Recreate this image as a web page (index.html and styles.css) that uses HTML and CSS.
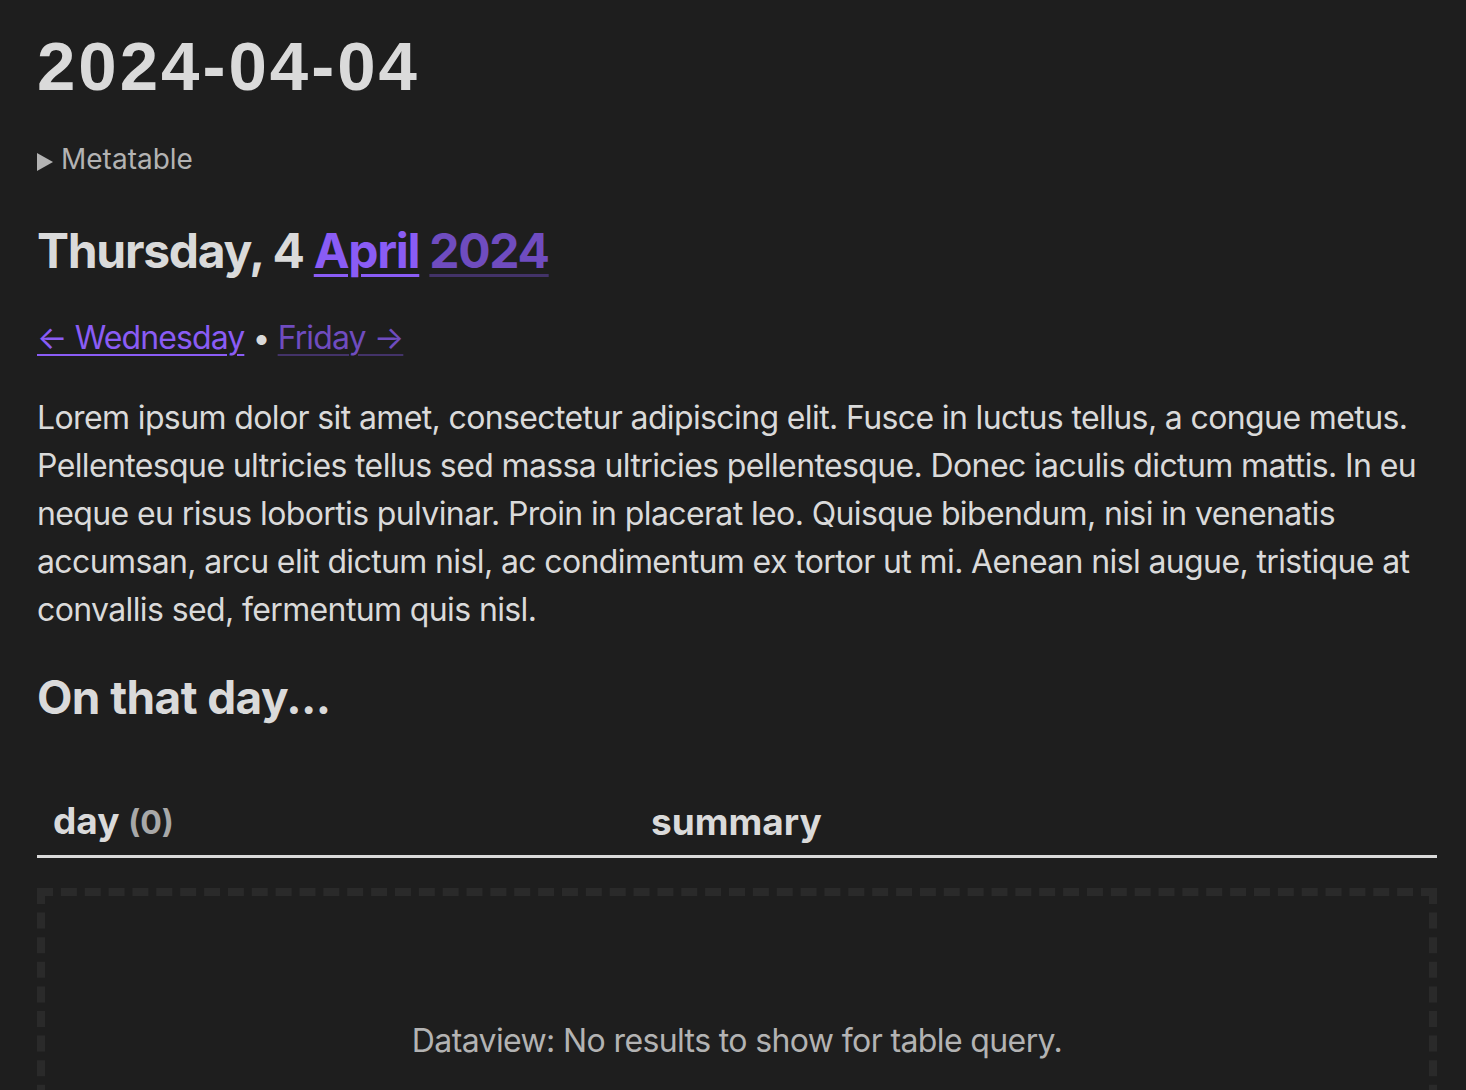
FILE: index.html
```html
<!DOCTYPE html>
<html>
<head>
<meta charset="utf-8">
<link rel="stylesheet" href="styles.css">
</head>
<body>
<div class="page">
  <div class="inline-title">2024-04-04</div>
  <details class="meta">
    <summary>Metatable</summary>
  </details>
  <h2 class="day-heading">Thursday, 4 <a class="link">April</a> <a class="link unresolved">2024</a></h2>
  <p class="nav"><a class="link">← Wednesday</a> • <a class="link unresolved">Friday →</a></p>
  <p class="body-text">Lorem ipsum dolor sit amet, consectetur adipiscing elit. Fusce in luctus tellus, a congue metus. Pellentesque ultricies tellus sed massa ultricies pellentesque. Donec iaculis dictum mattis. In eu neque eu risus lobortis pulvinar. Proin in placerat leo. Quisque bibendum, nisi in venenatis accumsan, arcu elit dictum nisl, ac condimentum ex tortor ut mi. Aenean nisl augue, tristique at convallis sed, fermentum quis nisl.</p>
  <h3 class="sub-heading">On that day...</h3>
  <table class="dv-table">
    <thead>
      <tr>
        <th class="col-day">day <span class="count">(0)</span></th>
        <th class="col-summary">summary</th>
      </tr>
    </thead>
  </table>
  <div class="empty">Dataview: No results to show for table query.</div>
</div>
</body>
</html>
```

FILE: styles.css
```css
html, body {
  margin: 0;
  padding: 0;
  background: #1e1e1e;
  height: 100%;
  overflow: hidden;
}
.page {
  padding: 0 29px 0 37px;
  font-family: Inter, "Noto Sans", sans-serif;
  font-size: 32px;
  line-height: 48px;
  letter-spacing: -0.62px;
  color: #dadada;
}
.inline-title {
  font-family: "Liberation Sans", Arial, sans-serif;
  font-weight: 700;
  font-size: 69px;
  line-height: 80px;
  letter-spacing: 3px;
  margin-top: 27px;
  color: #dadada;
}
.meta {
  margin-top: 32px;
  font-size: 28px;
  line-height: 40px;
  letter-spacing: 0;
  color: #b3b3b3;
}
.meta summary {
  list-style: none;
  cursor: pointer;
}
.meta summary::-webkit-details-marker {
  display: none;
}
.meta summary::before {
  content: "";
  display: inline-block;
  width: 0;
  height: 0;
  border-top: 9px solid transparent;
  border-bottom: 9px solid transparent;
  border-left: 16px solid #b3b3b3;
  margin-right: 8px;
  vertical-align: -2px;
}
.day-heading {
  margin: 42px 0 0;
  font-size: 48px;
  line-height: 60px;
  font-weight: 700;
  letter-spacing: -1.3px;
}
.link {
  color: #8a5cf5;
  text-decoration: underline;
  text-decoration-thickness: 3px;
  text-underline-offset: 6px;
}
.link.unresolved {
  color: #6f4cbf;
  text-decoration-color: rgba(138, 92, 245, 0.35);
}
.nav {
  margin: 33px 0 0;
  letter-spacing: -0.9px;
}
.nav .link {
  text-decoration-thickness: 2px;
  text-underline-offset: 5px;
}
.body-text {
  margin: 32px 0 0;
}
.sub-heading {
  margin: 33px 0 0;
  font-size: 46px;
  line-height: 60px;
  font-weight: 700;
  letter-spacing: -0.6px;
}
.dv-table {
  width: 100%;
  border-collapse: collapse;
  margin-top: 66px;
}
.dv-table th {
  text-align: left;
  font-size: 37px;
  line-height: 48px;
  font-weight: 700;
  letter-spacing: 0;
  padding: 4px 16px 8px;
  border-bottom: 3px solid #dadada;
}
.col-day {
  width: 566px;
}
.count {
  color: #a8a8a8;
  font-size: 32px;
}
.empty {
  margin-top: 30px;
  border: 8px dashed #2a2a2a;
  padding: 121px 0 200px;
  text-align: center;
  color: #b3b3b3;
}
```
